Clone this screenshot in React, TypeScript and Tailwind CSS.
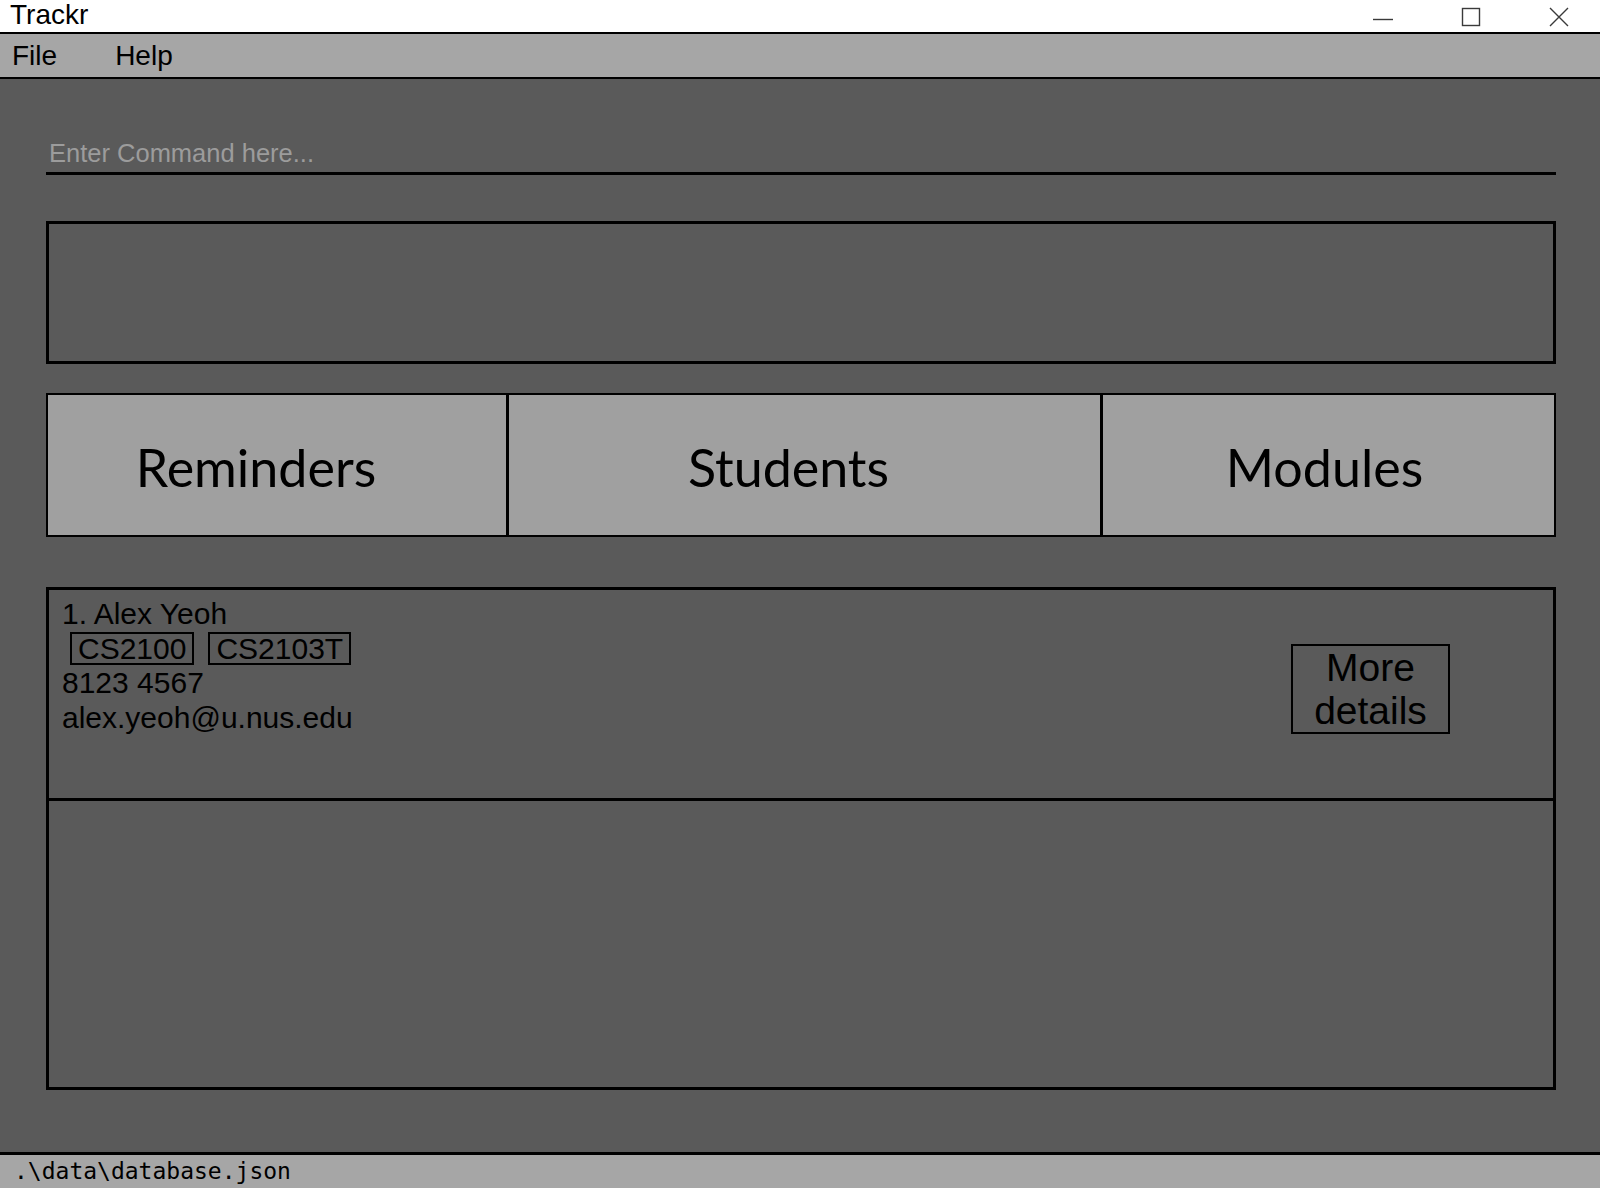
import React from 'react';

const tags = ['CS2100', 'CS2103T'];

const WindowControls: React.FC = () => (
  <div className="flex items-center h-full">
    <svg width="22" height="22" viewBox="0 0 22 22" className="mr-[66px]">
      <line x1="1" y1="14.5" x2="21" y2="14.5" stroke="#3a3a3a" strokeWidth="1.4" />
    </svg>
    <svg width="22" height="22" viewBox="0 0 22 22" className="mr-[66px]">
      <rect x="2.5" y="3.5" width="17" height="17" fill="none" stroke="#3a3a3a" strokeWidth="1.4" />
    </svg>
    <svg width="22" height="22" viewBox="0 0 22 22" className="mr-[30px]">
      <path d="M2 3 L20 21 M20 3 L2 21" stroke="#3a3a3a" strokeWidth="1.4" />
    </svg>
  </div>
);

const StudentCard: React.FC = () => (
  <div className="flex items-center h-[211px] border-b-[3px] border-black">
    <div className="flex-1 flex flex-col self-start pt-[6px] pl-[13px] text-[30px] leading-[35px] text-black">
      <span>1. Alex Yeoh</span>
      <div className="flex gap-[14px] ml-[8px] mt-[1px]">
        {tags.map((t) => (
          <span key={t} className="border-2 border-black px-[6px] text-[30px] leading-[29px]">
            {t}
          </span>
        ))}
      </div>
      <span>8123 4567</span>
      <span>alex.yeoh@u.nus.edu</span>
    </div>
    <button className="w-[159px] mr-[103px] mb-[10px] border-2 border-black text-[39px] leading-[43px] text-black text-center">
      More
      <br />
      details
    </button>
  </div>
);

export default function App() {
  return (
    <div className="w-[1600px] h-[1188px] flex flex-col bg-[#5a5a5a] overflow-hidden" style={{ fontFamily: '"Liberation Sans", Arial, sans-serif' }}>
      {/* title bar */}
      <div className="h-[34px] shrink-0 flex items-center justify-between bg-white border-b-2 border-black">
        <span className="pl-[10px] text-[28px] leading-[32px] text-black -mt-[2px]">Trackr</span>
        <WindowControls />
      </div>

      {/* menu */}
      <div className="h-[45px] shrink-0 flex items-center gap-[58px] pl-[12px] bg-[#a6a6a6] border-b-2 border-black text-[28px] text-black">
        <span>File</span>
        <span>Help</span>
      </div>

      {/* main */}
      <div className="flex-1 flex flex-col pl-[46px] pr-[44px]">
        <div className="mt-[56px] h-[40px] border-b-[3px] border-black flex items-center">
          <span className="ml-[3px] text-[25.5px] leading-[37px] text-[#9c9c9c]">Enter Command here...</span>
        </div>

        <div className="mt-[46px] h-[143px] border-[3px] border-black" />

        <div className="mt-[29px] h-[144px] flex border-2 border-black bg-[#a0a0a0] text-black text-[52px]" style={{ fontFamily: 'Lato, "Open Sans", sans-serif' }}>
          <div className="w-[461px] flex items-center justify-center pr-[42px] pt-[4px] border-r-[3px] border-black">Reminders</div>
          <div className="w-[594px] flex items-center justify-center pr-[32px] pt-[4px] border-r-[3px] border-black">Students</div>
          <div className="flex-1 flex items-center justify-center pr-[8px] pt-[4px]">Modules</div>
        </div>

        <div className="mt-[50px] h-[503px] border-[3px] border-black flex flex-col">
          <StudentCard />
        </div>
      </div>

      {/* status bar */}
      <div className="h-[36px] shrink-0 flex items-center pl-[14px] bg-[#a6a6a6] border-t-[3px] border-black text-[23px] text-black" style={{ fontFamily: '"DejaVu Sans Mono", monospace' }}>
        .\data\database.json
      </div>
    </div>
  );
}
